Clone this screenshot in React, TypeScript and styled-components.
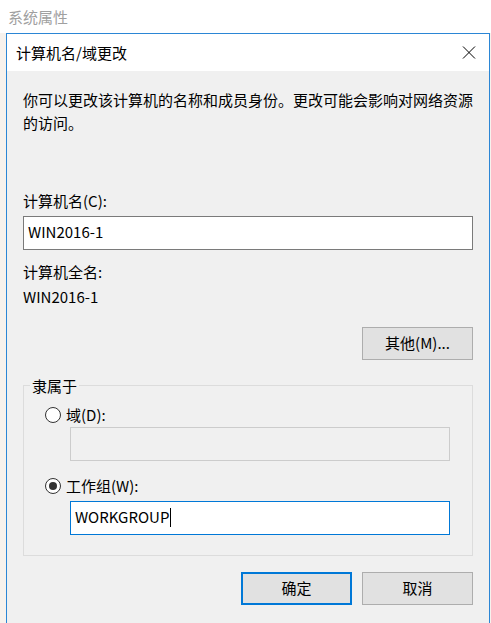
import React from 'react';
import styled, { createGlobalStyle, css } from 'styled-components';

const GlobalStyle = createGlobalStyle`
  html, body {
    margin: 0;
    padding: 0;
    background: #ffffff;
  }

  body {
    font-family: "Noto Sans CJK SC", "Noto Sans", sans-serif;
    font-size: 15px;
    color: #000000;
  }
`;

const Screen = styled.div`
  width: 491px;
  height: 623px;
  overflow: hidden;
  display: flex;
  flex-direction: column;
  background: #ffffff;
`;

const ParentCaption = styled.div`
  height: 33px;
  line-height: 33px;
  padding-left: 8px;
  color: #a0a0a0;
  white-space: nowrap;
`;

const Stage = styled.div`
  flex: 1;
  display: flex;
  align-items: stretch;
`;

interface StripProps {
  readonly width: number;
}

const ParentStrip = styled.div<StripProps>`
  width: ${props => props.width}px;
  flex-shrink: 0;
  background: #f7f2ed;
`;

const Dialog = styled.div`
  flex: 1;
  display: flex;
  flex-direction: column;
  border: 1px solid #2b86d5;
  border-bottom: none;
  background: #f0f0f0;
`;

const TitleBar = styled.div`
  height: 37px;
  display: flex;
  align-items: center;
  justify-content: space-between;
  padding: 0 13px 0 9px;
  background: #ffffff;
`;

const TitleText = styled.span`
  line-height: 23px;
`;

const CloseButton = styled.div`
  display: flex;
  align-items: center;
  justify-content: center;
  width: 14px;
  height: 13px;
`;

const Body = styled.div`
  flex: 1;
  padding: 17px 16px 0 16px;
`;

const Description = styled.p`
  margin: 0;
  line-height: 23px;
  white-space: nowrap;
`;

interface TextLineProps {
  readonly gap: number;
}

const TextLine = styled.div<TextLineProps>`
  margin-top: ${props => props.gap}px;
  line-height: 23px;
  white-space: nowrap;
`;

interface TextBoxProps {
  readonly gap: number;
  readonly indent?: number;
  readonly variant?: 'normal' | 'disabled' | 'focused';
}

const TextBox = styled.div<TextBoxProps>`
  box-sizing: border-box;
  height: 34px;
  margin-top: ${props => props.gap}px;
  margin-left: ${props => props.indent ?? 0}px;
  padding-left: 4px;
  display: flex;
  align-items: center;
  border: 1px solid #7a7a7a;
  background: #ffffff;
  line-height: 23px;
  padding-bottom: 3px;

  ${props =>
    props.variant === 'disabled' &&
    css`
      border-color: #cccccc;
      background: #f0f0f0;
    `}

  ${props =>
    props.variant === 'focused' &&
    css`
      border-color: #0078d7;
    `}
`;

const Caret = styled.span`
  display: inline-block;
  width: 1px;
  height: 19px;
  margin-left: 1px;
  margin-top: 2px;
  background: #000000;
`;

interface ButtonRowProps {
  readonly gap: number;
}

const ButtonRow = styled.div<ButtonRowProps>`
  display: flex;
  justify-content: flex-end;
  gap: 10px;
  margin-top: ${props => props.gap}px;
`;

interface PushButtonProps {
  readonly primary?: boolean;
}

const PushButton = styled.div<PushButtonProps>`
  box-sizing: border-box;
  width: 111px;
  height: 33px;
  display: flex;
  align-items: center;
  justify-content: center;
  padding-bottom: 2px;
  border: 1px solid #adadad;
  background: #e1e1e1;
  white-space: nowrap;

  ${props =>
    props.primary &&
    css`
      border: 2px solid #0078d7;
    `}
`;

const GroupBox = styled.fieldset`
  margin: 14px 0 0 0;
  padding: 0;
  border: 1px solid #dcdcdc;
  min-width: 0;
`;

const GroupTitle = styled.legend`
  margin-left: 6px;
  padding: 0 2px;
  line-height: 23px;
`;

const GroupContent = styled.div`
  padding: 0 22px 20px 21px;
`;

interface RadioRowProps {
  readonly gap: number;
}

const RadioRow = styled.div<RadioRowProps>`
  display: flex;
  align-items: center;
  gap: 5px;
  height: 23px;
  margin-top: ${props => props.gap}px;
  white-space: nowrap;
`;

interface RadioCircleProps {
  readonly checked?: boolean;
}

const RadioCircle = styled.span<RadioCircleProps>`
  box-sizing: border-box;
  width: 16px;
  height: 16px;
  flex-shrink: 0;
  border: 1px solid #333333;
  border-radius: 50%;
  background: #ffffff;
  display: flex;
  align-items: center;
  justify-content: center;

  &::after {
    content: '';
    width: 8px;
    height: 8px;
    border-radius: 50%;
    background: ${props => (props.checked ? '#333333' : 'transparent')};
  }
`;

const CloseIcon = () => (
  <svg width="14" height="13" viewBox="0 0 14 13">
    <path d="M1 0.5 L13 12.5 M13 0.5 L1 12.5" stroke="#000000" strokeWidth="1" fill="none" />
  </svg>
);

const App = () => {
  return (
    <>
      <GlobalStyle />
      <Screen>
        <ParentCaption>系统属性</ParentCaption>
        <Stage>
          <ParentStrip width={6} />
          <Dialog>
            <TitleBar>
              <TitleText>计算机名/域更改</TitleText>
              <CloseButton>
                <CloseIcon />
              </CloseButton>
            </TitleBar>
            <Body>
              <Description>
                你可以更改该计算机的名称和成员身份。更改可能会影响对网络资源
                <br />
                的访问。
              </Description>
              <TextLine gap={55}>计算机名(C):</TextLine>
              <TextBox gap={4}>WIN2016-1</TextBox>
              <TextLine gap={10}>计算机全名:</TextLine>
              <TextLine gap={2}>WIN2016-1</TextLine>
              <ButtonRow gap={19}>
                <PushButton>其他(M)...</PushButton>
              </ButtonRow>
              <GroupBox>
                <GroupTitle>隶属于</GroupTitle>
                <GroupContent>
                  <RadioRow gap={6}>
                    <RadioCircle />
                    域(D):
                  </RadioRow>
                  <TextBox gap={1} indent={25} variant="disabled" />
                  <RadioRow gap={13}>
                    <RadioCircle checked />
                    工作组(W):
                  </RadioRow>
                  <TextBox gap={4} indent={25} variant="focused">
                    WORKGROUP
                    <Caret />
                  </TextBox>
                </GroupContent>
              </GroupBox>
              <ButtonRow gap={16}>
                <PushButton primary>确定</PushButton>
                <PushButton>取消</PushButton>
              </ButtonRow>
            </Body>
          </Dialog>
          <ParentStrip width={1} />
        </Stage>
      </Screen>
    </>
  );
};

export default App;
